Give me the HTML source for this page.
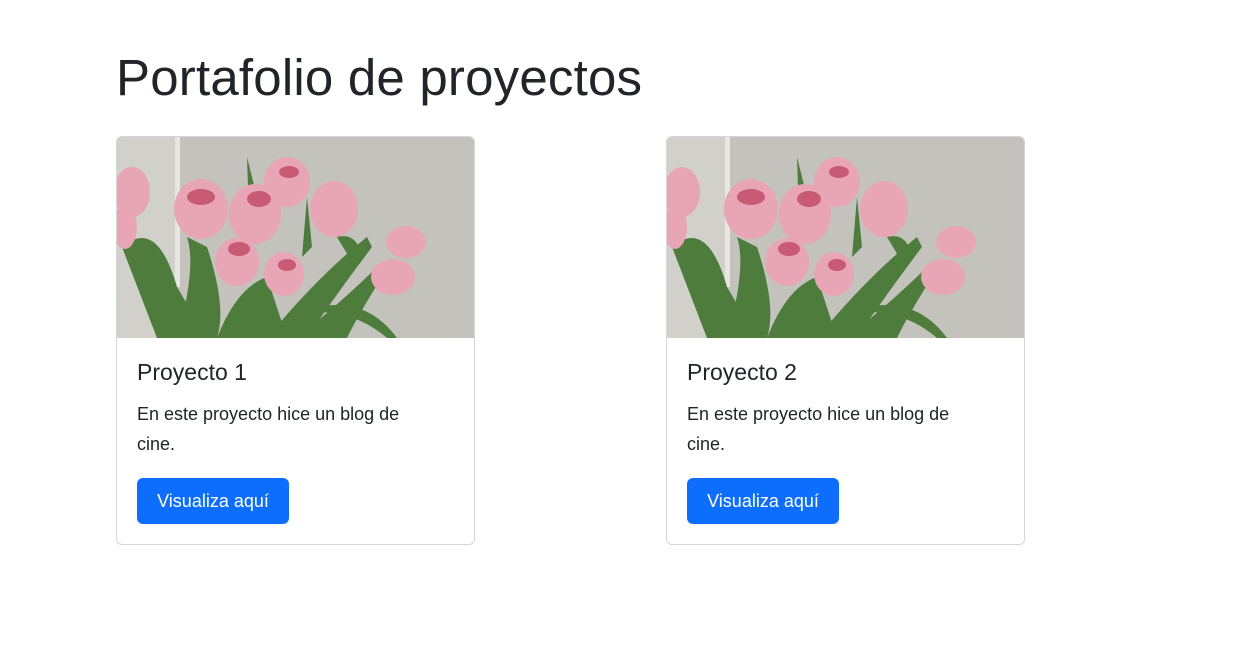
<!DOCTYPE html><html><head><meta charset="utf-8"><style>
body{margin:0;background:#fff;font-family:"Liberation Sans",sans-serif;color:#212529}
h1{position:absolute;left:116px;top:48px;margin:0;font-size:51px;font-weight:500;line-height:60px;letter-spacing:0.2px}
.card{position:absolute;top:136px;width:357px;height:407px;border:1px solid #d5d6d8;border-radius:6px;overflow:hidden}
.card svg{display:block}
.t{position:absolute;left:20px;top:222px;font-size:23px;font-weight:500}
.p{position:absolute;left:20px;top:262px;font-size:18px;line-height:30px;width:300px}
.b{position:absolute;left:20px;top:341px;width:152px;height:46px;background:#0d6efd;color:#fff;border-radius:6px;font-size:18px;line-height:46px;text-align:center}
</style></head><body>
<h1>Portafolio de proyectos</h1>
<svg width="0" height="0" style="position:absolute"><defs><g id="img">
<rect width="358" height="201" fill="#c4c2bd"/>
<rect x="0" width="60" height="201" fill="#d2d0cb"/>
<rect x="58" width="5" height="150" fill="#e8e6e2"/>
<g fill="#4e7c3c">
<path d="M5 110 Q40 80 60 150 L90 201 L40 201 Z"/>
<path d="M60 201 Q80 130 70 100 L90 110 Q110 170 100 201Z"/>
<path d="M100 201 Q120 150 150 140 L170 201Z"/>
<path d="M150 201 Q200 140 250 100 L255 110 Q210 170 190 201Z"/>
<path d="M180 201 Q230 160 260 130 L265 140 Q240 180 230 201Z"/>
<path d="M200 170 Q250 160 280 201 L270 201 Q240 175 200 175Z"/>
<path d="M130 20 L140 60 L132 80Z"/>
<path d="M190 60 L195 110 L185 120Z"/>
<path d="M220 100 Q240 95 245 120 L235 125Z"/>
</g>
<g fill="#e7a5b5">
<ellipse cx="84" cy="72" rx="27" ry="30"/>
<ellipse cx="138" cy="77" rx="26" ry="30"/>
<ellipse cx="170" cy="45" rx="23" ry="25"/>
<ellipse cx="217" cy="72" rx="24" ry="28"/>
<ellipse cx="120" cy="125" rx="22" ry="24"/>
<ellipse cx="167" cy="137" rx="20" ry="22"/>
<ellipse cx="289" cy="105" rx="20" ry="16"/>
<ellipse cx="276" cy="140" rx="22" ry="18"/>
<ellipse cx="15" cy="55" rx="18" ry="25"/>
<ellipse cx="8" cy="90" rx="12" ry="22"/>
</g>
<g fill="#c85a76">
<ellipse cx="84" cy="60" rx="14" ry="8"/>
<ellipse cx="142" cy="62" rx="12" ry="8"/>
<ellipse cx="172" cy="35" rx="10" ry="6"/>
<ellipse cx="122" cy="112" rx="11" ry="7"/>
<ellipse cx="170" cy="128" rx="9" ry="6"/>
</g></g></defs></svg>
<div class="card" style="left:116px"><svg width="358" height="201"><use href="#img"/></svg><div class="t">Proyecto 1</div><div class="p">En este proyecto hice un blog de cine.</div><div class="b">Visualiza aquí</div></div>
<div class="card" style="left:666px"><svg width="358" height="201"><use href="#img"/></svg><div class="t">Proyecto 2</div><div class="p">En este proyecto hice un blog de cine.</div><div class="b">Visualiza aquí</div></div>
</body></html>
